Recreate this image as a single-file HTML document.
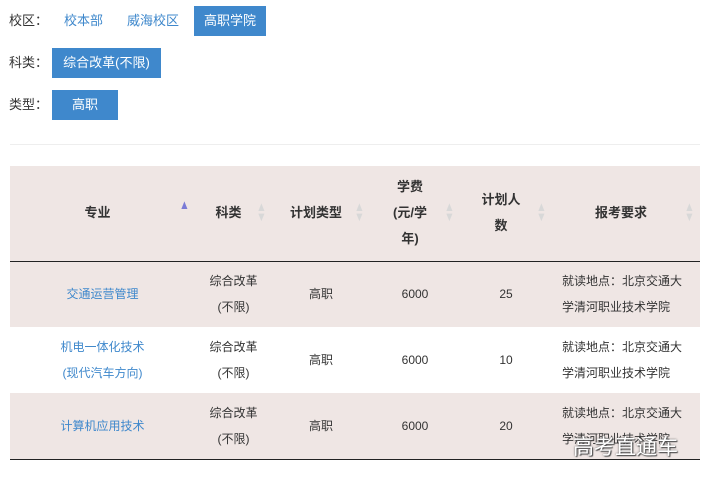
<html><head><style>
body{margin:0;width:711px;height:485px;background:#fff;font-family:"Liberation Sans","Noto Sans CJK SC",sans-serif;font-size:13px;color:#333;position:relative;overflow:hidden}
.a{position:absolute}
.btn{position:absolute;background:#3f88cc;color:#fff;height:30px;line-height:30px;text-align:center;font-size:13px}
.lk{position:absolute;color:#3f88cc;top:6px;line-height:30px}
table{position:absolute;left:10px;top:166px;width:690px;border-collapse:collapse;table-layout:fixed}
th{background:#efe6e4;font-weight:bold;height:95px;line-height:26px;border-bottom:1.5px solid #222;position:relative;padding:0 14px 0 4px;font-size:13px}
td{height:66px;text-align:center;line-height:26px;font-size:12px}
tr.s td{background:#efe6e4}
tr:last-child td{border-bottom:1.5px solid #222}
.ar{position:absolute;right:4px;top:36px;font-size:13px;line-height:10px;color:#d8d8d8;transform:scaleX(0.8)}
.l{color:#3f88cc}
.r{text-align:left;padding-left:10px;padding-right:12px}
</style></head><body>
<div class="a" style="left:9px;top:6px;line-height:30px">校区：</div>
<div class="lk" style="left:64px">校本部</div>
<div class="lk" style="left:127px">威海校区</div>
<div class="btn" style="left:194px;top:6px;width:72px">高职学院</div>
<div class="a" style="left:9px;top:48px;line-height:30px">科类：</div>
<div class="btn" style="left:52px;top:48px;width:109px">综合改革(不限)</div>
<div class="a" style="left:9px;top:90px;line-height:30px">类型：</div>
<div class="btn" style="left:52px;top:90px;width:66px">高职</div>
<div class="a" style="left:10px;top:144px;width:690px;height:1px;background:#eee"></div>
<table>
<colgroup><col style="width:185px"><col style="width:77px"><col style="width:98px"><col style="width:90px"><col style="width:92px"><col style="width:148px"></colgroup>
<tr><th>专业<span class="ar" style="color:#7b7bd6;top:34px">▲</span></th><th>科类<span class="ar">▲<br>▼</span></th><th>计划类型<span class="ar">▲<br>▼</span></th><th>学费<br>(元/学<br>年)<span class="ar">▲<br>▼</span></th><th>计划人<br>数<span class="ar">▲<br>▼</span></th><th>报考要求<span class="ar">▲<br>▼</span></th></tr>
<tr class="s"><td class="l">交通运营管理</td><td>综合改革<br>(不限)</td><td>高职</td><td>6000</td><td>25</td><td class="r">就读地点：北京交通大<br>学清河职业技术学院</td></tr>
<tr><td class="l">机电一体化技术<br>(现代汽车方向)</td><td>综合改革<br>(不限)</td><td>高职</td><td>6000</td><td>10</td><td class="r">就读地点：北京交通大<br>学清河职业技术学院</td></tr>
<tr class="s"><td class="l">计算机应用技术</td><td>综合改革<br>(不限)</td><td>高职</td><td>6000</td><td>20</td><td class="r">就读地点：北京交通大<br>学清河职业技术学院</td></tr>
</table>
<div class="a" style="left:573px;top:431px;font-size:21px;color:#fff;text-shadow:0 0 2px #555,1px 1px 1px #444">高考直通车</div>
</body></html>
